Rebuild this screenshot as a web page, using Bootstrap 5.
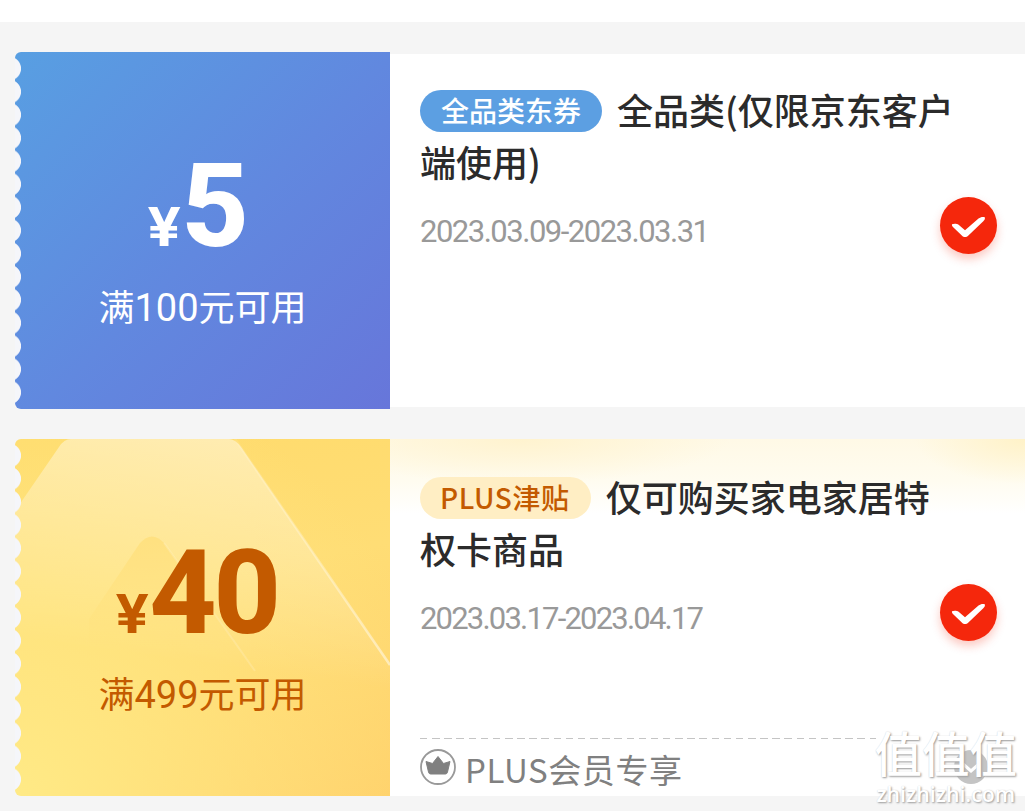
<!DOCTYPE html>
<html lang="zh-CN">
<head>
  <meta charset="UTF-8" />
  <meta name="viewport" content="width=device-width, initial-scale=1.0"/>
  <title>优惠券</title>
  <link href="https://cdn.jsdelivr.net/npm/bootstrap@5.3.3/dist/css/bootstrap.min.css" rel="stylesheet">
  <style>
    body {
      background: #f5f5f5;
      font-family: Roboto, "Noto Sans CJK SC", sans-serif;
      height: 811px;
    }
    .top-strip { height: 22px; }
    .coupon-list {
      padding: 30px 0 0 15px;
      gap: 30px;
    }
    .coupon { height: 357px; }

    /* left part with the amount */
    .ticket {
      width: 375px;
      border-radius: 6px 0 0 6px;
      overflow: hidden;
    }
    .ticket::before {
      content: "";
      position: absolute;
      left: 0;
      top: 5px;
      width: 7px;
      height: 347px;
      z-index: 1;
      background: radial-gradient(circle at -6px 50%, #f5f6fa 11.6px, transparent 12.4px) 0 0 / 7px 23.13px repeat-y;
    }
    .ticket-blue {
      background: linear-gradient(135deg, #589fe2 0%, #6188df 52%, #6776da 100%);
      color: #fff;
    }
    .ticket-gold {
      background:
        radial-gradient(circle at 0 100%, #ffea86 0%, rgba(255, 234, 134, 0) 85%),
        linear-gradient(170deg, #ffdb6c 0%, #ffdd75 40%, #ffcf69 100%);
      color: #c35a00;
    }
    .amount-row {
      margin-top: 95px;
      padding-right: 10px;
      line-height: 118px;
      height: 118px;
    }
    .yen {
      font-family: Inter, sans-serif;
      font-size: 53px;
      font-weight: 700;
      margin-right: 2px;
    }
    .yen span {
      display: inline-block;
      transform: scaleX(1.12);
    }
    .amount {
      font-size: 117px;
      font-weight: 800;
      letter-spacing: -3px;
    }
    .limit {
      margin-top: 14px;
      font: 36px/52px "Noto Sans CJK SC", sans-serif;
    }
    .limit span {
      font-family: Roboto, sans-serif;
      font-size: 38px;
      font-weight: 400;
    }

    /* right part */
    .info-side { min-width: 0; }
    .info-plain { margin: 2px 0; }
    .info-main { padding: 30px 28px 0 30px; }
    .info-text { min-width: 0; }
    .info-plus {
      background:
        radial-gradient(ellipse 210px 45px at 130px 0, #fff3cf 0%, rgba(255, 243, 207, 0) 100%),
        radial-gradient(ellipse 110px 45px at 100% 0, #fff2c8 0%, rgba(255, 242, 200, 0) 100%),
        linear-gradient(#fff9e6 0, #fffcf0 42px, #fff 75px);
    }
    .info-plus .info-main { padding-top: 32px; }
    .coupon-title {
      font: 500 36px/51.5px "Noto Sans CJK SC", sans-serif;
      color: #2b2b2b;
      height: 103px;
    }
    .tag {
      display: inline-block;
      height: 42px;
      padding: 0 21px;
      margin: 6px 15px 0 0;
      font-size: 28px;
      line-height: 41px;
      vertical-align: top;
      border-radius: 21px;
    }
    .tag-blue { background: #5c9fe2; color: #fff; }
    .tag-gold {
      background: #ffeec4;
      color: #c35a00;
      padding-left: 20px;
      letter-spacing: .6px;
    }
    .period {
      margin-top: 25px;
      font-size: 31px;
      font-weight: 400;
      line-height: 40px;
      letter-spacing: -1.5px;
      color: #999;
    }
    .info-plus .period { letter-spacing: -1.8px; }
    .checked {
      width: 57px;
      height: 57px;
      margin-top: 113px;
      background: #f5270c;
      box-shadow: 0 5px 10px rgba(245, 39, 12, .25);
    }
    .info-foot {
      height: 58px;
      margin-left: 30px;
      padding-right: 37px;
      background: repeating-linear-gradient(90deg, #c4c4c4 0 7.5px, transparent 7.5px 12.15px) 0 0 / 456px 1px no-repeat;
      color: #808080;
    }
    .foot-text {
      font: 33px/48px "Noto Sans CJK SC", sans-serif;
      letter-spacing: .6px;
      margin: 3px 0 0 9px;
    }

    /* site stamp lying over the corner */
    .stamp {
      position: absolute;
      right: 8px;
      bottom: 4px;
      color: #fff;
      text-shadow: 1px 1px 2px #999, 0 0 1px #ddd;
    }
    .stamp-zh { font: 500 47.5px/58px "Noto Sans CJK SC", sans-serif; }
    .stamp-en { font: 600 21.3px/26px "Open Sans", sans-serif; }
  </style>
</head>
<body class="position-relative overflow-hidden">
  <div class="top-strip bg-white"></div>

  <div class="coupon-list d-flex flex-column">
    <!-- 全品类东券 -->
    <div class="coupon d-flex">
      <div class="ticket ticket-blue position-relative flex-shrink-0 text-center">
        <div class="amount-row d-flex justify-content-center align-items-baseline">
          <div class="yen"><span>¥</span></div><div class="amount">5</div>
        </div>
        <div class="limit">满<span>100</span>元可用</div>
      </div>
      <div class="info-side info-plain bg-white flex-grow-1">
        <div class="info-main d-flex justify-content-between">
          <div class="info-text">
            <div class="coupon-title text-nowrap"><span class="tag tag-blue">全品类东券</span>全品类(仅限京东客户<br>端使用)</div>
            <div class="period">2023.03.09-2023.03.31</div>
          </div>
          <div class="checked rounded-circle flex-shrink-0">
            <svg width="57" height="57" viewBox="0 0 57 57" class="d-block"><path d="M12 27.2C13.5 26.5 17 26.4 18.6 27.8L25 33.3L38.5 21.5C40.5 19.8 43 19.6 44.8 20.2C45.2 21.8 44.6 23 43.3 24.2L28.4 38.4C26.3 40.5 23.8 40.5 21.8 38.4L13.2 30.2C12.2 29.2 11.7 28.3 12 27.2Z" fill="#fff"/></svg>
          </div>
        </div>
      </div>
    </div>

    <!-- PLUS津贴 -->
    <div class="coupon d-flex">
      <div class="ticket ticket-gold position-relative flex-shrink-0 text-center">
        <svg class="position-absolute top-0 start-0" width="375" height="357" viewBox="0 0 375 357">
          <defs>
            <linearGradient id="hill" x1="0.6" y1="0" x2="0.4" y2="1">
              <stop offset="0" stop-color="#fff" stop-opacity=".46"/>
              <stop offset=".85" stop-color="#fff" stop-opacity="0"/>
            </linearGradient>
            <linearGradient id="peak" x1="0" y1="0" x2="0" y2="1">
              <stop offset="0" stop-color="#ffdc70" stop-opacity=".6"/>
              <stop offset=".8" stop-color="#ffdc70" stop-opacity="0"/>
            </linearGradient>
            <linearGradient id="edge" x1="0" y1="0" x2="0" y2="1">
              <stop offset="0" stop-color="#fff" stop-opacity=".1"/>
              <stop offset="1" stop-color="#fff" stop-opacity=".5"/>
            </linearGradient>
          </defs>
          <path d="M0 72L44 8Q49 0 56 0H214Q220 0 226 8L375 226V260H0Z" fill="url(#hill)"/>
          <path d="M220 0L375 226" stroke="url(#edge)" stroke-width="2.5" fill="none"/>
          <path d="M74 180L125 104Q137 91 149 104L246 236H74Z" fill="url(#peak)"/>
          <path d="M149 104Q200 175 240 232" stroke="#fff" stroke-opacity=".16" stroke-width="2" fill="none"/>
        </svg>
        <div class="position-relative">
          <div class="amount-row d-flex justify-content-center align-items-baseline">
            <div class="yen"><span>¥</span></div><div class="amount">40</div>
          </div>
          <div class="limit">满<span>499</span>元可用</div>
        </div>
      </div>
      <div class="info-side info-plus flex-grow-1 d-flex flex-column justify-content-between">
        <div class="info-main d-flex justify-content-between">
          <div class="info-text">
            <div class="coupon-title text-nowrap"><span class="tag tag-gold">PLUS津贴</span>仅可购买家电家居特<br>权卡商品</div>
            <div class="period">2023.03.17-2023.04.17</div>
          </div>
          <div class="checked rounded-circle flex-shrink-0">
            <svg width="57" height="57" viewBox="0 0 57 57" class="d-block"><path d="M12 27.2C13.5 26.5 17 26.4 18.6 27.8L25 33.3L38.5 21.5C40.5 19.8 43 19.6 44.8 20.2C45.2 21.8 44.6 23 43.3 24.2L28.4 38.4C26.3 40.5 23.8 40.5 21.8 38.4L13.2 30.2C12.2 29.2 11.7 28.3 12 27.2Z" fill="#fff"/></svg>
          </div>
        </div>
        <div class="info-foot d-flex align-items-center">
          <svg width="36" height="36" viewBox="0 0 36 36">
            <circle cx="18" cy="18" r="17" fill="#fff" stroke="#999" stroke-width="1.8"/>
            <path d="M6 12.5L12.5 14.5L18 7.5L23.5 14.5L30 12.5L27.5 23Q27 25 25.5 25H10.5Q9 25 8.5 23Z" fill="#808080" stroke="#808080" stroke-linejoin="round"/>
          </svg>
          <span class="foot-text">PLUS会员专享</span>
          <svg class="ms-auto" width="34" height="34" viewBox="0 0 34 34">
            <circle cx="17" cy="17" r="17" fill="#c4c4c4"/>
            <path d="M9 14L17 21L25 14" stroke="#fff" stroke-width="3" fill="none"/>
          </svg>
        </div>
      </div>
    </div>
  </div>

  <div class="stamp text-center">
    <div class="stamp-zh">值值值</div>
    <div class="stamp-en">zhizhizhi.com</div>
  </div>

  <script src="https://cdn.jsdelivr.net/npm/bootstrap@5.3.3/dist/js/bootstrap.bundle.min.js"></script>
</body>
</html>
